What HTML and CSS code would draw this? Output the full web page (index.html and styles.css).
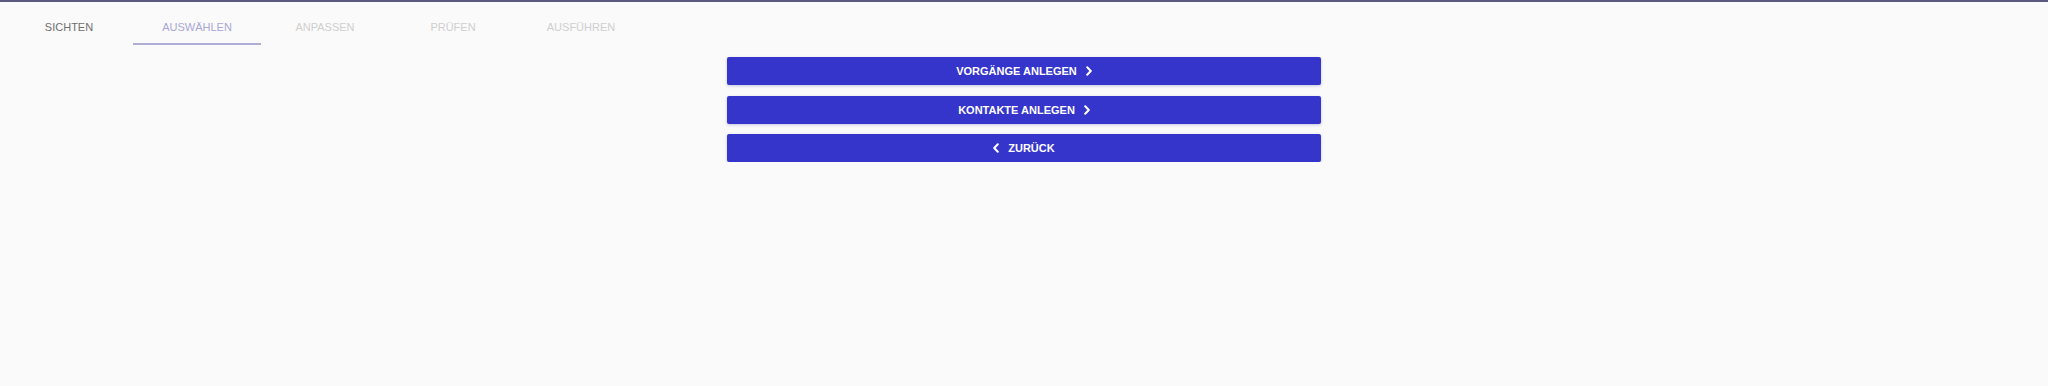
FILE: index.html
```html
<!DOCTYPE html>
<html lang="de">
<head>
<meta charset="utf-8">
<title>Schritte</title>
<link rel="stylesheet" href="styles.css">
</head>
<body>
<div class="topbar"></div>
<nav class="tabs">
  <div class="tab done">Sichten</div>
  <div class="tab active">Auswählen</div>
  <div class="tab disabled">Anpassen</div>
  <div class="tab disabled">Prüfen</div>
  <div class="tab disabled">Ausführen</div>
</nav>
<main class="actions">
  <button class="btn">Vorgänge anlegen
    <svg class="chev" viewBox="0 0 6 10" width="6" height="10"><path d="M1.2 1.2 L4.8 5 L1.2 8.8" /></svg>
  </button>
  <button class="btn">Kontakte anlegen
    <svg class="chev" viewBox="0 0 6 10" width="6" height="10"><path d="M1.2 1.2 L4.8 5 L1.2 8.8" /></svg>
  </button>
  <button class="btn">
    <svg class="chev" viewBox="0 0 6 10" width="6" height="10"><path d="M4.8 1.2 L1.2 5 L4.8 8.8" /></svg>
    Zurück
  </button>
</main>
</body>
</html>
```
FILE: styles.css
```css
html, body {
  margin: 0;
  padding: 0;
  background: #fafafa;
  font-family: "Liberation Sans", Arial, sans-serif;
}

.topbar {
  height: 2px;
  background: #5d5a82;
}

.tabs {
  display: flex;
  padding: 8px 0 0 5px;
}

.tab {
  width: 128px;
  height: 35px;
  box-sizing: border-box;
  border-bottom: 2px solid transparent;
  display: flex;
  align-items: center;
  justify-content: center;
  font-size: 11px;
  text-transform: uppercase;
  color: #cfcfcf;
}

.tab.done {
  color: #6f6f6f;
}

.tab.active {
  color: #a9a7d6;
  border-bottom-color: #b0aed6;
}

.actions {
  width: 594px;
  margin: 12px auto 0;
  display: flex;
  flex-direction: column;
  gap: 10.5px;
}

.btn {
  height: 28px;
  border: none;
  border-radius: 2px;
  background: #3535cc;
  color: #ffffff;
  font-family: "Liberation Sans", Arial, sans-serif;
  font-size: 11px;
  font-weight: 700;
  text-transform: uppercase;
  display: flex;
  align-items: center;
  justify-content: center;
  gap: 9px;
  padding: 0;
  box-shadow: 0 1px 3px rgba(40, 40, 160, 0.25);
  cursor: pointer;
}

.chev path {
  fill: none;
  stroke: #ffffff;
  stroke-width: 2;
  stroke-linecap: round;
  stroke-linejoin: round;
}
```
